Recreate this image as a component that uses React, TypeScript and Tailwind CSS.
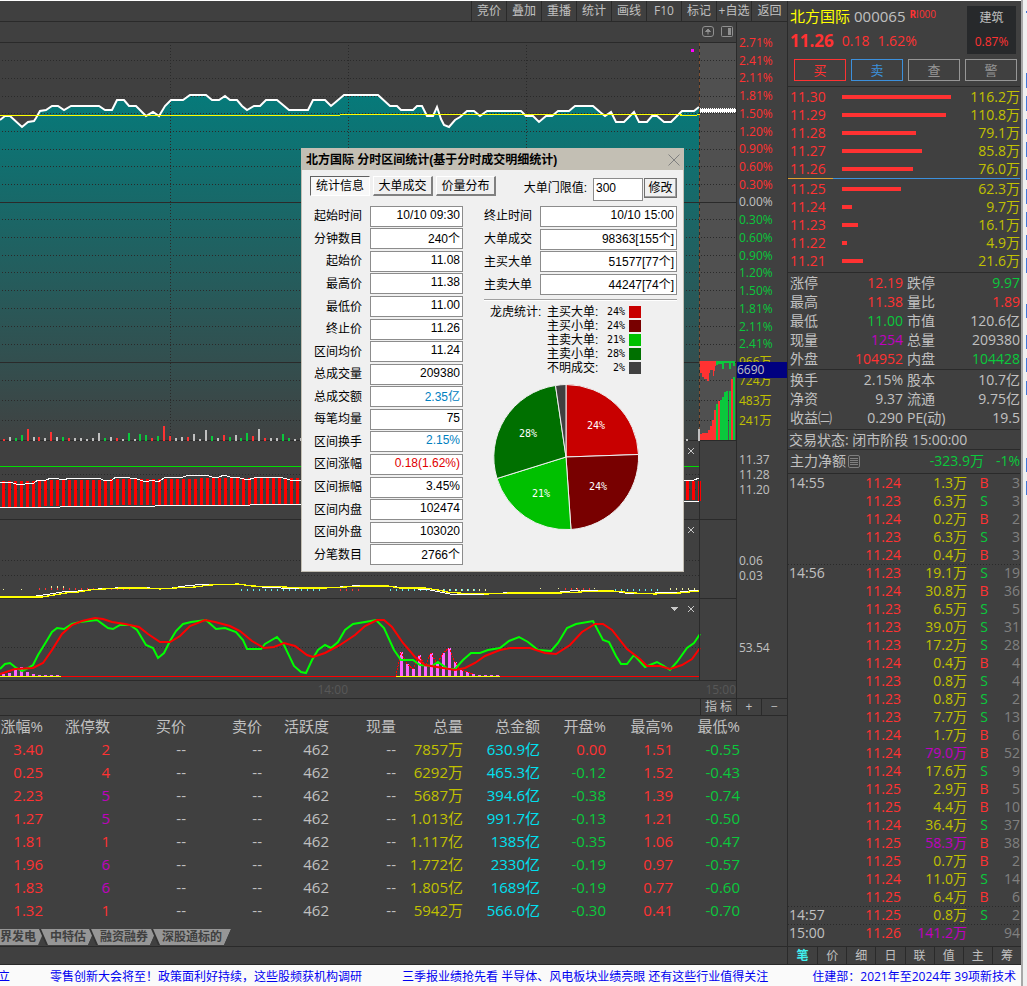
import React from 'react';

const RED = 'text-[#ff3232]';
const GREEN = 'text-[#0ac83c]';
const GOLD = 'text-[#c0c000]';
const PURPLE = 'text-[#c000c0]';
const CYAN = 'text-[#00e0f0]';
const GRAY = 'text-[#c0c0c0]';

const toolbar = ['竞价', '叠加', '重播', '统计', '画线', 'F10', '标记', '+自选', '返回'];

const axis = [
  '2.71%', '2.41%', '2.11%', '1.81%', '1.50%', '1.20%', '0.90%', '0.60%', '0.30%', '0.00%',
  '0.30%', '0.60%', '0.90%', '1.20%', '1.50%', '1.81%', '2.11%', '2.41%', '966万',
];

const axisColor = (i: number) => {
  if (i < 9) return RED;
  if (i === 9) return GRAY;
  return i === 18 ? GOLD : GREEN;
};

const asks = [
  { price: '11.30', bar: 109, amount: '116.2万' },
  { price: '11.29', bar: 104, amount: '110.8万' },
  { price: '11.28', bar: 74, amount: '79.1万' },
  { price: '11.27', bar: 80, amount: '85.8万' },
  { price: '11.26', bar: 71, amount: '76.0万' },
];

const bids = [
  { price: '11.25', bar: 59, amount: '62.3万' },
  { price: '11.24', bar: 10, amount: '9.7万' },
  { price: '11.23', bar: 16, amount: '16.1万' },
  { price: '11.22', bar: 5, amount: '4.9万' },
  { price: '11.21', bar: 21, amount: '21.6万' },
];

const stats = [
  ['涨停', '12.19', RED, '跌停', '9.97', GREEN],
  ['最高', '11.38', RED, '量比', '1.89', RED],
  ['最低', '11.00', GREEN, '市值', '120.6亿', GRAY],
  ['现量', '1254', PURPLE, '总量', '209380', GRAY],
  ['外盘', '104952', RED, '内盘', '104428', GREEN],
];

const capital = [
  ['换手', '2.15%', GRAY, '股本', '10.7亿', GRAY],
  ['净资', '9.37', GRAY, '流通', '9.75亿', GRAY],
  ['收益㈡', '0.290', GRAY, 'PE(动)', '19.5', GRAY],
];

const ticks = [
  ['14:55', '11.24', '1.3万', 'B', '3'],
  ['', '11.23', '6.3万', 'S', '3'],
  ['', '11.24', '0.2万', 'B', '2'],
  ['', '11.23', '6.3万', 'S', '3'],
  ['', '11.24', '0.4万', 'B', '3'],
  ['14:56', '11.23', '19.1万', 'S', '19'],
  ['', '11.24', '30.8万', 'B', '36'],
  ['', '11.23', '6.5万', 'S', '5'],
  ['', '11.23', '39.0万', 'S', '31'],
  ['', '11.23', '17.2万', 'S', '28'],
  ['', '11.24', '0.4万', 'B', '4'],
  ['', '11.23', '0.8万', 'S', '4'],
  ['', '11.23', '0.8万', 'S', '2'],
  ['', '11.23', '7.7万', 'S', '13'],
  ['', '11.24', '1.7万', 'B', '6'],
  ['', '11.24', '79.0万', 'B', '52'],
  ['', '11.24', '17.6万', 'S', '9'],
  ['', '11.25', '2.9万', 'B', '5'],
  ['', '11.25', '4.4万', 'B', '10'],
  ['', '11.24', '36.4万', 'S', '37'],
  ['', '11.25', '58.3万', 'B', '38'],
  ['', '11.25', '0.7万', 'B', '2'],
  ['', '11.24', '11.0万', 'S', '14'],
  ['', '11.25', '6.4万', 'B', '6'],
  ['14:57', '11.25', '0.8万', 'S', '2'],
  ['15:00', '11.26', '141.2万', '', '94'],
];

const quoteHead = [
  '涨幅%', '涨停数', '买价', '卖价', '活跃度', '现量', '总量', '总金额', '开盘%', '最高%', '最低%',
];

const quotes = [
  ['3.40', '2', '7857万', '630.9亿', '0.00', '1.51', '-0.55'],
  ['0.25', '4', '6292万', '465.3亿', '-0.12', '1.52', '-0.43'],
  ['2.23', '5', '5687万', '394.6亿', '-0.38', '1.39', '-0.74'],
  ['1.27', '5', '1.013亿', '991.7亿', '-0.13', '1.21', '-0.50'],
  ['1.81', '1', '1.117亿', '1385亿', '-0.35', '1.06', '-0.47'],
  ['1.96', '6', '1.772亿', '2330亿', '-0.19', '0.97', '-0.57'],
  ['1.83', '6', '1.805亿', '1689亿', '-0.19', '0.77', '-0.60'],
  ['1.32', '1', '5942万', '566.0亿', '-0.30', '0.41', '-0.70'],
];

const news = [
  '立',
  '零售创新大会将至！政策面利好持续，这些股频获机构调研',
  '三季报业绩抢先看 半导体、风电板块业绩亮眼 还有这些行业值得关注',
  '住建部：2021年至2024年 39项新技术',
];

const summary = [
  ['起始时间', '10/10 09:30'],
  ['分钟数目', '240个'],
  ['起始价', '11.08'],
  ['最高价', '11.38'],
  ['最低价', '11.00'],
  ['终止价', '11.26'],
  ['区间均价', '11.24'],
  ['总成交量', '209380'],
  ['总成交额', '2.35亿', 'text-[#0080c0]'],
  ['每笔均量', '75'],
  ['区间换手', '2.15%', 'text-[#0080c0]'],
  ['区间涨幅', '0.18(1.62%)', 'text-[#e00000]'],
  ['区间振幅', '3.45%'],
  ['区间内盘', '102474'],
  ['区间外盘', '103020'],
  ['分笔数目', '2766个'],
];

const bigOrders = [
  ['终止时间', '10/10 15:00'],
  ['大单成交', '98363[155个]'],
  ['主买大单', '51577[77个]'],
  ['主卖大单', '44247[74个]'],
];

const legend = [
  ['主买大单', '24%', 'bg-[#c80000]'],
  ['主买小单', '24%', 'bg-[#780000]'],
  ['主卖大单', '21%', 'bg-[#00c000]'],
  ['主卖小单', '28%', 'bg-[#007000]'],
  ['不明成交', '2%', 'bg-[#404040]'],
];

const priceLine =
  '0,120 5,116 10,116 22,127 28,122 34,121 36,118 40,111 46,110 52,106 58,106 64,110 71,106 99,106 105,110 112,110 117,100 124,100 129,106 136,106 146,116 153,112 159,116 165,106 171,100 183,100 190,95 206,95 212,100 219,100 225,96 230,100 237,100 242,106 247,110 254,106 260,106 266,100 277,100 289,110 308,110 313,100 325,100 331,106 344,95 378,95 390,106 397,106 401,110 413,110 417,106 422,106 427,116 433,116 437,107 441,119 444,125 449,127 455,120 460,117 467,111 474,111 480,116 487,111 521,111 526,116 533,116 539,122 546,116 552,116 558,111 569,111 575,106 593,106 600,112 605,116 611,112 616,122 624,122 634,112 639,122 647,122 652,116 657,116 664,122 671,122 682,111 694,111 699,107';

const gridRows = [
  60, 78, 96, 113, 131, 149, 166, 184, 219, 237, 255, 272, 290, 308, 326, 344, 380, 400, 420,
];

// [x, height, colour]
const volume: [number, number, string][] = [
  [3, 2, 'r'], [9, 4, 'w'], [15, 3, 'g'], [21, 6, 'g'], [27, 12, 'r'], [33, 4, 'w'], [38, 4, 'r'],
  [44, 3, 'w'], [50, 9, 'r'], [56, 4, 'w'], [62, 4, 'g'], [68, 3, 'r'], [74, 3, 'w'], [80, 3, 'w'],
  [86, 2, 'w'], [92, 3, 'w'], [98, 8, 'w'], [104, 3, 'g'], [110, 4, 'w'], [116, 3, 'r'],
  [122, 2, 'w'], [128, 8, 'g'], [134, 2, 'w'], [139, 7, 'g'], [145, 6, 'g'], [151, 3, 'r'],
  [157, 5, 'g'], [163, 15, 'r'], [169, 5, 'r'], [175, 3, 'w'], [181, 4, 'w'], [187, 4, 'r'],
  [193, 7, 'w'], [199, 2, 'w'], [205, 11, 'w'], [211, 5, 'g'], [217, 3, 'w'], [223, 6, 'r'],
  [229, 4, 'g'], [235, 6, 'w'], [240, 3, 'g'], [246, 8, 'g'], [252, 5, 'r'], [258, 12, 'w'],
  [264, 3, 'r'], [270, 3, 'w'], [276, 3, 'w'], [282, 7, 'g'], [288, 3, 'g'], [294, 2, 'w'],
  [300, 3, 'w'], [686, 2, 'w'], [698, 12, 'w'],
];

const auction: [number, number, string][] = [
  [700, 6, 'r'], [702, 7, 'r'], [704, 7, 'r'], [706, 7, 'r'], [708, 10, 'r'], [710, 14, 'r'],
  [712, 20, 'r'], [714, 30, 'r'], [716, 36, 'g'], [718, 39, 'r'], [720, 40, 'g'], [722, 43, 'g'],
  [724, 48, 'g'], [726, 49, 'g'], [729, 49, 'g'], [731, 61, 'r'], [733, 63, 'g'],
];

const fills: Record<string, string> = { r: '#ff3232', g: '#0ac83c', w: '#c0c0c0' };

// [x, top] of the pink energy bars in the lowest pane
const energy = [
  [2, 674], [8, 673], [14, 670], [20, 667], [26, 672], [32, 674], [38, 675], [44, 675], [50, 675],
  [56, 675], [400, 652], [406, 664], [412, 669], [418, 655], [424, 666], [430, 653], [436, 664],
  [442, 653], [448, 648], [454, 662], [460, 670], [466, 672], [472, 674], [478, 675], [484, 675],
  [490, 675], [496, 675],
];

const Pane = ({
  top,
  className,
  children,
}: {
  top: number;
  className: string;
  children: React.ReactNode;
}) => {
  const heights: Record<number, number> = { 42: 399, 441: 79, 520: 79, 599: 82 };
  return (
    <svg
      viewBox={`0 ${top} 736 ${heights[top]}`}
      preserveAspectRatio="none"
      className={`block w-full ${className}`}
      shapeRendering="crispEdges"
    >
      {children}
    </svg>
  );
};

const Dotted = ({ y, to = 699 }: { y: number; to?: number }) => (
  <path d={`M2 ${y}.5H${to}`} stroke="#2a2a2a" strokeDasharray="1 2" />
);

const Cross = ({ y }: { y: number }) => (
  <path
    d={`M688 ${y - 3}l6 6M694 ${y - 3}l-6 6`}
    stroke="#c8c8c8"
    shapeRendering="geometricPrecision"
  />
);

const Frame = ({ y }: { y: number }) => (
  <path d={`M0 ${y}.5H736M699.5 ${y}V${y - 81}`} stroke="#2a2a2a" fill="none" />
);

const MainPane = () => (
  <Pane top={42} className="h-[399px]">
    <defs>
      <linearGradient id="area" x1="0" y1="95" x2="0" y2="440" gradientUnits="userSpaceOnUse">
        <stop offset="0" stopColor="#067a7a" />
        <stop offset="1" stopColor="#404242" />
      </linearGradient>
    </defs>
    <rect x="699" y="43" width="37" height="397" fill="#505050" />
    <polygon points={`0,440 ${priceLine} 699,440`} fill="url(#area)" />
    {gridRows.map((y) => (
      <Dotted key={y} y={y} to={736} />
    ))}
    <path d="M0 42.5H736M0 202.5H736M0 362.5H736M0 440.5H736" stroke="#2a2a2a" />
    <path
      d="M170.5 45V440M348.5 45V440M526.5 45V440"
      stroke="#2a2a2a"
      strokeDasharray="1 2"
    />
    <path d="M699.5 43V440" stroke="#2a2a2a" />
    <path d="M699.5 43V440" stroke="#805030" strokeDasharray="3 3" />
    <rect x="691" y="49" width="3" height="3" fill="#ff00ff" />
    <polyline
      points={priceLine}
      fill="none"
      stroke="#fff"
      strokeWidth="2"
      shapeRendering="geometricPrecision"
    />
    <path d="M700 110.5H736" stroke="#fff" strokeWidth="3" />
    <path d="M700 108.5H736M700 112.5H736" stroke="#fff" strokeDasharray="1 1" />
    <path d="M0 115.5H340M340 114.5H682M680 115.5H697M697 114.5H700" stroke="#ff0" />
    {volume.map(([x, h, c]) => (
      <rect key={x} x={x} y={441 - h} width="2" height={h} fill={fills[c]} />
    ))}
    <path d="M700 361H716V366H715V371H714V376H713V370H710V373H709V381H707V379H704V377H702V373H700Z" fill="#ff3232" />
    <path d="M716 361H735V366H733V363H731V369H729V363H724V369H722V364H718V365H716Z" fill="#0ac83c" />
    {auction.map(([x, h, c]) => (
      <rect key={x} x={x} y={440 - h} width="2" height={h} fill={fills[c]} />
    ))}
  </Pane>
);

const BandPane = () => {
  const bars = Array.from({ length: 50 }, (_, i) => 2 + i * 6);
  return (
    <Pane top={441} className="h-[79px]">
      <Dotted y={474} />
      <Dotted y={489} />
      {bars.map((x) => (
        <rect
          key={x}
          x={x}
          y={x < 40 ? 481 : x < 110 ? 480 : x < 200 ? 479 : 478}
          width="3"
          height={x < 155 ? 26 : 27}
          fill="#f00"
        />
      ))}
      <path d="M686 481h3v19h-3zM692 481h3v19h-3zM698 481h3v20h-3z" fill="#f00" />
      <path d="M0 466.5H699" stroke="#00dc00" />
      <polyline
        points="0,482 10,482 16,484 22,485 28,483 34,483 38,480 46,480 51,478 59,479 64,480 69,478 99,478 103,480 112,480 116,477 130,478 137,479 146,482 152,480 158,482 164,478 170,477 183,477 189,475 206,475 212,477 219,477 224,475 230,477 237,477 247,480 254,478 262,477 280,477 290,480 302,480 684,480 694,480 699,478"
        fill="none"
        stroke="#fff"
      />
      <path d="M0 507.5H60M60 506.5H155M155 505.5H250M250 504.5H400M400 501.5H699" stroke="#fff" />
      <Cross y={451} />
      <Frame y={519} />
    </Pane>
  );
};

const MacdPane = () => (
  <Pane top={520} className="h-[79px]">
    <Dotted y={560} />
    <Dotted y={575} />
    <path d="M3 589.5H40M540 588.5H600" stroke="#f0f0a0" strokeDasharray="1 17" />
    <path d="M51 587.5H66" stroke="#f0f0a0" strokeWidth="3" strokeDasharray="1 5" />
    <path d="M39 588.5H135M340 589.5H362M565 588.5H595" stroke="#ff3232" strokeWidth="2" strokeDasharray="1 5" />
    <path d="M241 589.5H325M390 589.5H480M615 589.5H660" stroke="#60f0f0" strokeWidth="2" strokeDasharray="1 5" />
    <path d="M443 589.5H490M670 588.5H699" stroke="#f0f0a0" strokeWidth="2" strokeDasharray="1 5" />
    <polyline
      points="0,597 36,596 50,594 62,592 78,591 98,589 115,588 130,587 150,588 165,589 185,586 205,584 238,584 262,587 300,589 340,587 365,585 388,586 405,588 430,590 440,592 450,594 487,594 520,592 560,592 580,590 613,591 625,593 655,593 680,592 699,590"
      fill="none"
      stroke="#fff"
    />
    <polyline
      points="0,597 42,597 54,595 66,593 78,592 90,590 104,589 120,588 145,588 160,589 175,588 195,587 210,585 238,584 252,586 285,587 300,588 325,588 345,587 362,586 388,586 400,588 425,588 438,590 447,592 458,593 487,594 510,593 530,593 560,593 580,592 600,591 613,591 635,593 655,594 680,593 699,591"
      fill="none"
      stroke="#ff0"
      strokeWidth="1.2"
    />
    <Cross y={530} />
    <Frame y={598} />
  </Pane>
);

const EnergyPane = () => (
  <Pane top={599} className="h-[82px]">
    <Dotted y={647} />
    {energy.map(([x, y]) => (
      <rect key={x} x={x} y={y} width="3" height={677 - y} fill="#ff64ff" />
    ))}
    <polyline
      points="396,676 401,652 407,664 413,669 419,655 425,666 431,653 437,664 443,653 449,648 455,662 461,670 467,672 473,674"
      fill="none"
      stroke="#f00"
      strokeDasharray="2 1"
    />
    <path d="M61 676.5H396M500 676.5H699" stroke="#f00" />
    <path d="M0 676.5H61M396 676.5H500" stroke="#ff0" />
    <polyline
      points="0,669 5,664 10,663 15,667 22,671 28,668 33,665 38,655 46,642 52,632 57,628 64,629 72,624 80,622 97,620 108,628 113,629 120,625 130,625 137,630 146,645 153,648 158,658 164,653 170,641 176,631 183,624 191,622 206,620 216,629 225,628 236,632 243,640 247,649 261,649 265,644 277,637 284,645 294,666 301,672 306,673 312,660 318,650 325,645 331,648 338,642 345,630 353,624 365,622 376,620 384,628 394,650 401,660 413,660 420,665 432,666 438,662 448,669 455,669 463,660 471,653 480,653 488,650 500,648 509,641 519,637 528,642 538,650 551,651 558,643 567,628 576,624 593,621 603,640 609,642 616,656 621,664 627,664 634,655 645,667 657,662 664,666 670,670 677,662 687,648 694,643 700,634"
      fill="none"
      stroke="#0f0"
      strokeWidth="2"
      shapeRendering="geometricPrecision"
    />
    <polyline
      points="0,674 15,669 33,668 43,663 52,650 62,634 72,625 82,621 95,618 103,619 112,622 125,624 139,627 148,634 160,642 170,642 180,636 190,626 205,620 215,622 230,626 240,631 252,641 264,648 274,647 284,643 295,646 307,655 313,657 325,653 340,645 355,635 365,626 377,620 384,620 392,627 403,643 415,657 425,665 437,667 455,670 465,668 475,663 485,656 500,650 510,648 530,648 545,653 556,654 570,645 582,632 595,624 603,624 612,630 627,649 640,659 647,666 660,666 670,669 682,665 692,659 700,648"
      fill="none"
      stroke="#f00"
      strokeWidth="2"
      shapeRendering="geometricPrecision"
    />
    <path d="M671 607H678L674.5 611Z" fill="#c8c8c8" />
    <Cross y={609} />
    <Frame y={680} />
  </Pane>
);

const Axis = () => (
  <div className="relative w-[51px] shrink-0 border-l border-[#2a2a2a] pl-[2px] pt-3 text-xs">
    <div className="grid h-[337px] auto-rows-fr">
      {axis.map((label, i) => (
        <span key={i} className={`flex min-h-0 items-center leading-none ${axisColor(i)}`}>
          {label}
        </span>
      ))}
    </div>
    {['724万', '483万', '241万'].map((v) => (
      <div key={v} className={`h-5 leading-5 ${GOLD}`}>
        {v}
      </div>
    ))}
    <div className="mt-[21px] leading-[15px]">
      <div>11.37</div>
      <div>11.28</div>
      <div>11.20</div>
    </div>
    <div className="mt-14 leading-[15px]">
      <div>0.06</div>
      <div>0.03</div>
    </div>
    <div className="mt-[57px] leading-[15px]">53.54</div>
    <span className="absolute left-0 top-[340px] h-4 w-full bg-[#000080] leading-4">6690</span>
  </div>
);

const numberColor = (v: string) => (v.startsWith('-') ? GREEN : RED);

const QuoteTable = () => (
  <table className="w-full table-fixed border-collapse text-right text-[15px] leading-[21px]">
    <colgroup>
      <col className="w-[43px]" />
      <col className="w-[67px]" />
      <col className="w-[76px]" />
      <col className="w-[76px]" />
      <col className="w-[67px]" />
      <col className="w-[67px]" />
      <col className="w-[67px]" />
      <col className="w-[77px]" />
      <col className="w-[66px]" />
      <col className="w-[67px]" />
      <col className="w-[67px]" />
      <col />
    </colgroup>
    <thead>
      <tr className="h-[23px] align-top">
        {quoteHead.map((h) => (
          <th key={h} className="whitespace-nowrap p-0 font-normal">
            {h}
          </th>
        ))}
        <th />
      </tr>
    </thead>
    <tbody>
      {quotes.map(([change, limit, vol, amount, open, high, low]) => (
        <tr key={change} className="h-[23px] align-top">
          <td className={`p-0 ${RED}`}>{change}</td>
          <td className={`p-0 ${Number(limit) > 4 ? PURPLE : RED}`}>{limit}</td>
          <td className="p-0">--</td>
          <td className="p-0">--</td>
          <td className="p-0">462</td>
          <td className="p-0">--</td>
          <td className={`p-0 ${GOLD}`}>{vol}</td>
          <td className={`p-0 ${CYAN}`}>{amount}</td>
          <td className={`p-0 ${numberColor(open)}`}>{open}</td>
          <td className={`p-0 ${numberColor(high)}`}>{high}</td>
          <td className={`p-0 ${numberColor(low)}`}>{low}</td>
          <td />
        </tr>
      ))}
    </tbody>
  </table>
);

const SectorTabs = () => (
  <div className="mb-px mt-[6px] flex h-4 text-xs font-bold leading-4 text-[#404040]">
    <button className="h-4 bg-[#969696] pr-[9px] [clip-path:polygon(0_0,100%_0,calc(100%-7px)_100%,0_100%)]">
      界发电
    </button>
    {['中特估', '融资融券', '深股通标的'].map((t) => (
      <button
        key={t}
        className="-ml-[6px] h-4 bg-[#333] [clip-path:polygon(0_0,100%_0,calc(100%-7px)_100%,7px_100%)]"
      >
        <span className="block bg-[#969696] pl-[11px] pr-[9px] [clip-path:polygon(2px_0,100%_0,calc(100%-7px)_100%,9px_100%)]">
          {t}
        </span>
      </button>
    ))}
  </div>
);

const Depth = ({ rows }: { rows: typeof asks }) => (
  <div className="pl-[2px]">
    {rows.map((r) => (
      <div key={r.price} className="flex h-[18px] items-center leading-[18px]">
        <span className={`w-[52px] ${RED}`}>{r.price}</span>
        <span className="h-1 bg-[#ff3232]" style={{ width: r.bar }} />
        <span className={`ml-auto ${GOLD}`}>{r.amount}</span>
      </div>
    ))}
  </div>
);

const Stats = ({ rows }: { rows: string[][] }) => (
  <div className="border-b border-[#2a2a2a] pl-[2px] pt-px last:pb-px">
    {rows.map(([a, av, ac, b, bv, bc]) => (
      <div key={a} className="flex h-[19px] leading-[17px]">
        <span>{a}</span>
        <span className={`mr-1 flex-1 text-right ${ac}`}>{av}</span>
        <span className="flex w-[113px] justify-between">
          <span>{b}</span>
          <span className={bc}>{bv}</span>
        </span>
      </div>
    ))}
  </div>
);

const tickColor = (amount: string) => (parseFloat(amount) > 50 ? PURPLE : GOLD);

const QuotePanel = () => (
  <aside className="flex w-[234px] shrink-0 flex-col border-l border-[#2a2a2a] pr-px text-sm">
    <div className="flex justify-between pl-[2px] pr-1 pt-[5px]">
      <div>
        <div className="flex h-5 items-center gap-1 text-[15px] leading-5">
          <span className="text-[#ffff00]">北方国际</span>
          <span>000065</span>
          <span className={`self-start text-[10px] leading-4 ${RED}`}>
            <b>R</b>I000
          </span>
        </div>
        <div className={`mt-[3px] flex h-6 items-center gap-2 ${RED}`}>
          <b className="text-[17px]">11.26</b>
          <span>0.18</span>
          <span>1.62%</span>
        </div>
      </div>
      <div className="flex h-12 w-[49px] flex-col justify-between bg-[#27292b] py-[3px] text-center text-xs leading-[18px]">
        <span>建筑</span>
        <span className={RED}>0.87%</span>
      </div>
    </div>
    <div className="mt-[5px] grid h-[22px] grid-cols-4 gap-[5px] pl-[6px] pr-[3px] text-[13px] leading-[18px]">
      <button className="border border-[#ff3232] text-[#ff3232]">买</button>
      <button className="border border-[#3c90dc] text-[#3c90dc]">卖</button>
      <button className="border border-[#969696] text-[#969696]">查</button>
      <button className="border border-[#969696] text-[#969696]">警</button>
    </div>
    <div className="mt-[5px] border-t border-[#2a2a2a] pt-px">
      <Depth rows={asks} />
      <div className="flex h-px pb-0.5">
        <span className="h-px w-[45px] bg-[#e0a030]" />
        <span className="h-px flex-1 bg-[#3c90dc]" />
      </div>
      <Depth rows={bids} />
    </div>
    <div className="mt-[2px] border-t border-[#2a2a2a]">
      <Stats rows={stats} />
      <Stats rows={capital} />
    </div>
    <div className="h-5 border-b border-[#2a2a2a] pl-px leading-[19px]">
      交易状态: 闭市阶段 15:00:00
    </div>
    <div className="flex h-6 items-center border-b border-[#2a2a2a] pb-px pl-[2px]">
      <span>主力净额</span>
      <svg width="13" height="13" viewBox="0 0 13 13" className="ml-[2px]" fill="none" stroke="#808080">
        <rect x="0.5" y="0.5" width="11" height="12" rx="1.5" />
        <path d="M2 3.5H10M2 5.5H10M2 7.5H10M2 9.5H10" />
      </svg>
      <span className={`ml-auto ${GREEN}`}>-323.9万</span>
      <span className={`ml-3 ${GREEN}`}>-1%</span>
    </div>
    <table className="w-full table-fixed border-collapse text-right leading-[18px]">
      <colgroup>
        <col className="w-[47px]" />
        <col className="w-[66px]" />
        <col className="w-[66px]" />
        <col className="w-[34px]" />
        <col />
      </colgroup>
      <tbody>
        {ticks.map(([time, price, amount, side, count], i) => (
          <tr
            key={i}
            className={
              time && i > 0
                ? 'h-[18px] bg-[repeating-linear-gradient(90deg,#2a2a2a_0_1px,transparent_1px_3px)] bg-[length:100%_1px] bg-no-repeat'
                : 'h-[18px]'
            }
          >
            <td className="p-0 pl-px text-left">{time}</td>
            <td className={`p-0 ${RED}`}>{price}</td>
            <td className={`p-0 ${tickColor(amount)}`}>{amount}</td>
            <td className={`p-0 text-center ${side === 'B' ? RED : GREEN}`}>{side}</td>
            <td className="p-0 text-[#808080]">{count}</td>
          </tr>
        ))}
      </tbody>
    </table>
    <div className="-mr-px mt-auto grid h-[19px] grid-cols-8 border-y border-[#2a2a2a] text-xs leading-[17px]">
      {['笔', '价', '细', '日', '联', '值', '主', '筹'].map((t, i) => (
        <button
          key={t}
          className={
            i === 0 ? 'font-bold text-[#40f0f0]' : 'border-l border-[#2a2a2a]'
          }
        >
          {t}
        </button>
      ))}
    </div>
  </aside>
);

const Fields = ({ rows, prefix, className }: { rows: string[][]; prefix: string; className: string }) => (
  <div className={`grid auto-rows-fr grid-cols-1 ${className}`}>
    {rows.map(([label, value, color]) => (
      <div key={label} className="flex min-h-0 min-w-0 items-center">
        <label htmlFor={prefix + label} className="w-[52px] shrink-0 text-right">
          {label}
        </label>
        <input
          id={prefix + label}
          readOnly
          value={value}
          className={`ml-2 h-[21px] w-0 min-w-0 flex-1 border border-[#8c8c8c] bg-white pb-[3px] pr-[2px] text-right ${color || ''}`}
        />
      </div>
    ))}
  </div>
);

const raised =
  'h-5 border border-b-2 border-r-2 border-white border-b-[#808080] border-r-[#808080] bg-[#f0f0f0] leading-4';

const StatsDialog = () => (
  <section
    role="dialog"
    aria-label="分时区间统计"
    className="absolute left-[301px] top-[148px] w-[383px] border border-[#c3bfb4] bg-[#f0f0f0] font-['Liberation_Sans','Noto_Sans_CJK_SC',sans-serif] text-xs text-black"
  >
    <header className="flex h-[21px] items-center justify-between bg-[#c3bfb4] pl-1 pr-[3px] font-bold">
      <span>北方国际 分时区间统计(基于分时成交明细统计)</span>
      <button aria-label="关闭">
        <svg width="12" height="12" viewBox="0 0 12 12" stroke="#808080">
          <path d="M0.5 0.5L11.5 11.5M11.5 0.5L0.5 11.5" />
        </svg>
      </button>
    </header>
    <div className="flex items-start justify-between pl-2 pr-[6px] pt-[6px]">
      <div className="flex gap-[3px]">
        <button className="h-5 w-[60px] border border-b-white border-l-[#606060] border-r-white border-t-[#606060] bg-[#f8f8f8] leading-[18px]">
          统计信息
        </button>
        <button className={`w-[60px] ${raised}`}>大单成交</button>
        <button className={`w-[60px] ${raised}`}>价量分布</button>
      </div>
      <div className="flex pt-[2px]">
        <label htmlFor="limit" className="mr-[6px] leading-[20px]">
          大单门限值:
        </label>
        <input
          id="limit"
          defaultValue="300"
          className="h-[23px] w-[50px] border border-[#8c8c8c] bg-white pb-1 pl-[2px]"
        />
        <button className="ml-px h-5 w-[33px] border border-[#707070] bg-[#f0f0f0] leading-4 shadow-[inset_-1px_-1px_#a0a0a0]">
          修改
        </button>
      </div>
    </div>
    <div className="flex pb-[5px] pl-2 pr-[6px] pt-1">
      <Fields rows={summary} prefix="s-" className="h-[361px] w-[153px]" />
      <div className="ml-[17px] min-w-0 flex-1">
        <Fields rows={bigOrders} prefix="b-" className="h-[91px]" />
        <div className="ml-1 mt-[3px] h-[2px] border-b border-t border-b-white border-t-[#a0a0a0]" />
        <div className="ml-[10px] mt-[4px] flex">
          <span className="w-[57px] leading-[14px]">龙虎统计:</span>
          <ul>
            {legend.map(([label, pct, swatch]) => (
              <li key={label} className="flex h-[14px] items-center leading-[14px]">
                <span className="w-[54px]">{label}:</span>
                <span className="w-[24px] text-right font-['DejaVu_Sans_Mono',monospace] text-[10px]">
                  {pct}
                </span>
                <span className={`ml-1 size-3 ${swatch}`} />
              </li>
            ))}
          </ul>
        </div>
        <svg
          width="148"
          height="148"
          viewBox="492 383 148 148"
          className="ml-[12px] mt-[8px] font-['DejaVu_Sans_Mono',monospace] text-[10px]"
          stroke="#f0f0f0"
        >
          <path d="M566 457V384.500A72.500 72.500 0 0 1 638.500 454.500Z" fill="#c80000" />
          <path d="M566 457L638.500 454.500A72.500 72.500 0 0 1 571 529.500Z" fill="#780000" />
          <path d="M566 457L571 529.500A72.500 72.500 0 0 1 497 478.500Z" fill="#00c000" />
          <path d="M566 457L497 478.500A72.500 72.500 0 0 1 555.500 385.500Z" fill="#007000" />
          <path d="M566 457L555.500 385.500A72.500 72.500 0 0 1 566 384.500Z" fill="#404040" />
          <g fill="#fff" stroke="none" textAnchor="middle">
            <text x="596" y="429">24%</text>
            <text x="598" y="490">24%</text>
            <text x="541" y="497">21%</text>
            <text x="528" y="437">28%</text>
          </g>
        </svg>
      </div>
    </div>
  </section>
);

// window edge with the neighbouring page showing through
const EdgeStrip = () => (
  <svg
    viewBox="0 0 6 986"
    preserveAspectRatio="none"
    className="w-[6px] shrink-0 self-stretch bg-[#f0f0f0]"
  >
    <path d="M0 0H2V986H0Z" fill="#a8a8a8" />
    <path
      d="M5 11h1v2h-1zM5 73h1v15h-1zM5 96h1v15h-1zM5 119h1v15h-1zM5 142h1v15h-1zM5 169h1v11h-1zM5 189h1v15h-1zM5 212h1v15h-1zM5 235h1v15h-1zM5 258h1v15h-1zM5 304h1v14h-1zM5 335h1v14h-1zM5 358h1v14h-1zM5 381h1v14h-1zM5 458h1v14h-1zM5 481h1v14h-1z"
      fill="#4078d8"
    />
  </svg>
);

const App = () => (
  <div className="flex min-h-screen overflow-hidden bg-[#404040] font-['Open_Sans','Noto_Sans_CJK_SC',sans-serif] text-[#c0c0c0]">
    <div className="flex min-w-0 flex-1 flex-col border-t border-white">
      <div className="flex flex-1">
        <main className="flex min-w-0 flex-1 flex-col">
          <nav className="flex h-[21px] justify-end border-b border-[#2a2a2a] text-xs leading-5">
            {toolbar.map((t) => (
              <button
                key={t}
                className="w-[35px] whitespace-nowrap border-l border-[#2a2a2a] last:w-9"
              >
                {t}
              </button>
            ))}
          </nav>
          <div className="flex">
            <div className="min-w-0 flex-1">
              <div className="flex h-5 items-center justify-end gap-[7px] pr-[3px]">
                <svg width="12" height="12" viewBox="0 0 12 12" fill="none" stroke="#909090">
                  <rect x="0.5" y="0.5" width="11" height="10" rx="2.5" />
                  <path d="M6 3L3.500 5.500H8.500Z" fill="#909090" />
                  <path d="M6 4V8.500" />
                </svg>
                <svg width="12" height="12" viewBox="0 0 12 12" fill="none" stroke="#909090">
                  <rect x="0.5" y="0.5" width="11" height="10" rx="1" />
                  <rect x="7" y="2" width="3" height="7" fill="#909090" stroke="none" />
                </svg>
              </div>
              <MainPane />
              <BandPane />
              <MacdPane />
              <EnergyPane />
            </div>
            <Axis />
          </div>
          <div className="flex h-[18px] border-b border-[#2a2a2a] text-xs leading-[17px] text-[#585858]">
            <span className="w-[348px] text-right">14:00</span>
            <span className="flex-1 text-right">15:00</span>
            <span className="w-[51px] border-l border-[#2a2a2a]" />
          </div>
          <div className="flex h-[17px] justify-end border-b border-[#2a2a2a] text-xs leading-4">
            <button className="w-9 border-l border-[#2a2a2a]">指 标</button>
            <button className="w-[25px] border-l border-[#2a2a2a]">+</button>
            <button className="w-[26px] border-l border-[#2a2a2a]">−</button>
          </div>
          <QuoteTable />
          <SectorTabs />
          <div className="h-[19px] border-y border-[#2a2a2a]" />
        </main>
        <QuotePanel />
      </div>
      <footer className="flex h-[21px] gap-10 overflow-hidden whitespace-nowrap bg-[#fafafa] text-xs leading-6">
        {news.map((n) => (
          <a key={n} href="#" className="text-[#0000f0] first:-ml-[2px] last:ml-1">
            {n}
          </a>
        ))}
      </footer>
    </div>
    <EdgeStrip />
    <StatsDialog />
  </div>
);

export default App;
